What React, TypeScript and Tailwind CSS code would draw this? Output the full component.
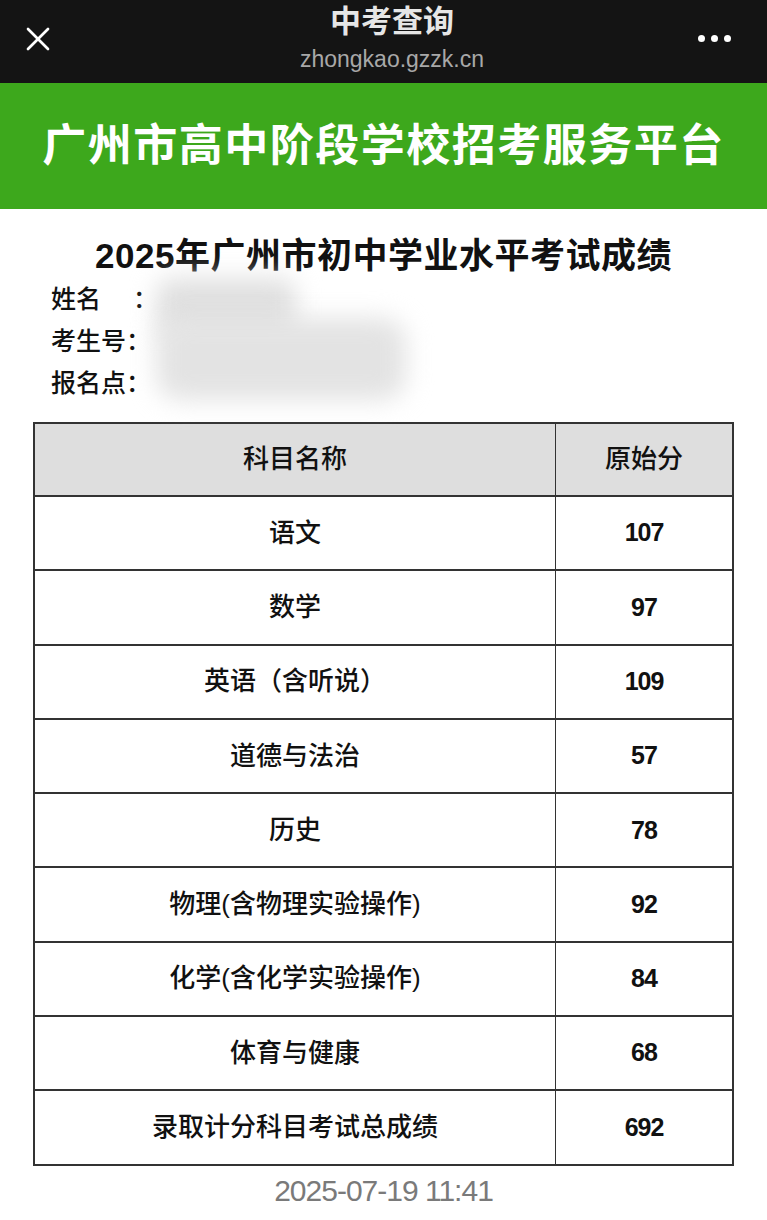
import { X } from 'lucide-react';

const rows = [
  { name: '语文', score: '107' },
  { name: '数学', score: '97' },
  { name: '英语（含听说）', score: '109' },
  { name: '道德与法治', score: '57' },
  { name: '历史', score: '78' },
  { name: '物理(含物理实验操作)', score: '92' },
  { name: '化学(含化学实验操作)', score: '84' },
  { name: '体育与健康', score: '68' },
  { name: '录取计分科目考试总成绩', score: '692' },
];

const font = { fontFamily: '"Liberation Sans", "Noto Sans CJK SC", sans-serif' };

export default function App() {
  return (
    <div className="w-[767px] h-[1220px] bg-white overflow-hidden" style={font}>
      {/* Top bar */}
      <div className="h-[83px] bg-[#141414] flex items-start justify-between pl-[18px] pr-[36px]">
        <X className="w-[40px] h-[40px] mt-[19px] text-white" strokeWidth={1.6} />
        <div className="flex flex-col items-center pt-[4px] gap-[5px] ml-[28px]">
          <div className="text-[31px] leading-[36px] font-bold text-[#e6e6e6]">中考查询</div>
          <div className="text-[23px] leading-[28px] text-[#a8a8a8]">zhongkao.gzzk.cn</div>
        </div>
        <div className="flex gap-[6px] items-center mt-[35px]">
          <span className="w-[7px] h-[7px] rounded-full bg-white" />
          <span className="w-[7px] h-[7px] rounded-full bg-white" />
          <span className="w-[7px] h-[7px] rounded-full bg-white" />
        </div>
      </div>

      {/* Green banner */}
      <div className="h-[126px] bg-[#3da81c] flex items-center justify-center">
        <div className="text-[44px] font-bold text-white tracking-[1.5px]">广州市高中阶段学校招考服务平台</div>
      </div>

      {/* Heading */}
      <div className="pt-[25px] text-center text-[35px] leading-[44px] font-bold text-[#111] tracking-[0.5px]">
        2025年广州市初中学业水平考试成绩
      </div>

      {/* Info */}
      <div className="relative pl-[51px] text-[25px] font-medium text-[#111]">
        <div className="h-[42px] leading-[42px] flex">
          <span className="w-[82px]">姓名</span>
          <span>：</span>
        </div>
        <div className="h-[42px] leading-[42px]">考生号：</div>
        <div className="h-[42px] leading-[42px]">报名点：</div>
        <div className="absolute left-[156px] top-[0px] w-[140px] h-[60px] bg-[#e0e0e0] blur-md rounded-2xl" />
        <div className="absolute left-[156px] top-[40px] w-[250px] h-[82px] bg-[#e3e3e3] blur-md rounded-3xl" />
      </div>

      {/* Table */}
      <div className="mx-[33px] mt-[18px] border-2 border-[#333] text-[#111]">
        <div className="flex h-[71px] bg-[#dedede] text-[26px] font-medium">
          <div className="w-[521px] flex items-center justify-center border-r border-[#333]">科目名称</div>
          <div className="flex-1 flex items-center justify-center">原始分</div>
        </div>
        {rows.map((r) => (
          <div key={r.name} className="flex h-[74.3px] border-t-2 border-[#333] text-[26px] font-medium">
            <div className="w-[521px] flex items-center justify-center border-r border-[#333]">{r.name}</div>
            <div className="flex-1 flex items-center justify-center font-bold text-[25px] tracking-[-1px]">{r.score}</div>
          </div>
        ))}
      </div>

      {/* Timestamp */}
      <div className="text-center text-[30px] leading-[40px] text-[#7a7a7a] mt-[5px] tracking-[-1px]">
        2025-07-19 11:41
      </div>
    </div>
  );
}
